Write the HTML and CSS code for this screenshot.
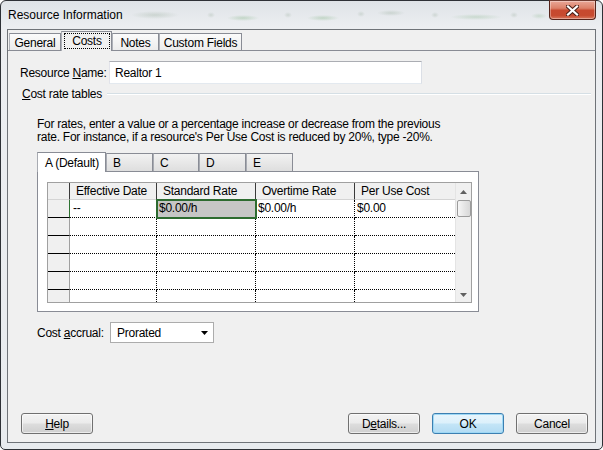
FILE: index.html
```html
<!DOCTYPE html>
<html>
<head>
<meta charset="utf-8">
<link rel="stylesheet" href="styles.css">
</head>
<body>
<div class="window">
  <div class="titlebar">
    <span class="title">Resource Information</span>
    <div class="close">
      <svg width="13" height="11" viewBox="0 0 13 11">
        <path d="M2 1.5 L11 9.5 M11 1.5 L2 9.5" stroke="#4a2018" stroke-width="4.2" stroke-linecap="square" fill="none"/>
        <path d="M2 1.5 L11 9.5 M11 1.5 L2 9.5" stroke="#ffffff" stroke-width="2.2" stroke-linecap="square" fill="none"/>
      </svg>
    </div>
  </div>
  <div class="client">
    <div class="tabs">
      <div class="tab w-general">General</div>
      <div class="tab sel w-costs"><span class="focus">Costs</span></div>
      <div class="tab w-notes">Notes</div>
      <div class="tab w-custom">Custom Fields</div>
    </div>
    <div class="panel">
      <div class="name-row">
        <span class="name-label">Resource <u>N</u>ame:</span>
        <div class="textbox">Realtor 1</div>
      </div>
      <div class="group">
        <span><u>C</u>ost rate tables</span>
        <div class="etch"></div>
      </div>
      <p class="info">For rates, enter a value or a percentage increase or decrease from the previous<br>rate. For instance, if a resource's Per Use Cost is reduced by 20%, type -20%.</p>
      <div class="itabs">
        <div class="itab sel w-a">A (Default)</div>
        <div class="itab w-b">B</div>
        <div class="itab w-c">C</div>
        <div class="itab w-d">D</div>
        <div class="itab w-e">E</div>
      </div>
      <div class="ipanel">
        <div class="grid">
          <div class="gtable">
            <div class="grow hdr">
              <div class="cell rh"></div>
              <div class="cell c1">Effective Date</div>
              <div class="cell c2">Standard Rate</div>
              <div class="cell c3">Overtime Rate</div>
              <div class="cell c4">Per Use Cost</div>
            </div>
            <div class="grow data active">
              <div class="cell rh"></div>
              <div class="cell c1">--</div>
              <div class="cell c2 selcell">$0.00/h</div>
              <div class="cell c3">$0.00/h</div>
              <div class="cell c4">$0.00</div>
            </div>
            <div class="grow data">
              <div class="cell rh"></div><div class="cell c1"></div><div class="cell c2"></div><div class="cell c3"></div><div class="cell c4"></div>
            </div>
            <div class="grow data">
              <div class="cell rh"></div><div class="cell c1"></div><div class="cell c2"></div><div class="cell c3"></div><div class="cell c4"></div>
            </div>
            <div class="grow data">
              <div class="cell rh"></div><div class="cell c1"></div><div class="cell c2"></div><div class="cell c3"></div><div class="cell c4"></div>
            </div>
            <div class="grow data">
              <div class="cell rh"></div><div class="cell c1"></div><div class="cell c2"></div><div class="cell c3"></div><div class="cell c4"></div>
            </div>
            <div class="grow data">
              <div class="cell rh"></div><div class="cell c1"></div><div class="cell c2"></div><div class="cell c3"></div><div class="cell c4"></div>
            </div>
          </div>
          <div class="sb">
            <div class="sb-btn up"><svg width="7" height="4" viewBox="0 0 7 4"><polygon points="3.5,0 7,4 0,4" fill="#606060"/></svg></div>
            <div class="sb-thumb"></div>
            <div class="sb-track"></div>
            <div class="sb-btn down"><svg width="7" height="4" viewBox="0 0 7 4"><polygon points="0,0 7,0 3.5,4" fill="#606060"/></svg></div>
          </div>
        </div>
      </div>
      <div class="accrual">
        <span class="acc-label">Cost <u>a</u>ccrual:</span>
        <div class="combo">
          <span>Prorated</span>
          <svg width="7" height="4" viewBox="0 0 7 4"><polygon points="0,0 7,0 3.5,4" fill="#000"/></svg>
        </div>
      </div>
    </div>
    <div class="buttons">
      <div class="btn"><span><u>H</u>elp</span></div>
      <div class="btn push"><span>D<u>e</u>tails...</span></div>
      <div class="btn ok"><span>OK</span></div>
      <div class="btn"><span>Cancel</span></div>
    </div>
  </div>
</div>
</body>
</html>
```

FILE: styles.css
```css
* { box-sizing: border-box; }
html, body { margin: 0; padding: 0; }
body {
  width: 603px;
  height: 450px;
  overflow: hidden;
  background: #ffffff;
  font: 12px/14px "Liberation Sans", Arial, sans-serif;
  color: #000;
}
u { text-decoration: underline; text-underline-offset: 1px; }

.window {
  width: 603px;
  height: 450px;
  border: 1px solid #2e3136;
  border-radius: 6px 6px 5px 5px;
  background: linear-gradient(#dfe3e7, #eceef1 26px, #e8ebee);
  padding: 0 6px 6px;
  display: flex;
  flex-direction: column;
}

.titlebar {
  height: 28px;
  margin: 0 -6px;
  padding: 0 6px 0 7px;
  display: flex;
  justify-content: space-between;
  align-items: flex-start;
  background-image:
    radial-gradient(ellipse 24px 4px at 154px 14px, rgba(110,140,110,0.22), transparent),
    radial-gradient(ellipse 4px 3px at 210px 14px, rgba(110,140,110,0.2), transparent),
    radial-gradient(ellipse 16px 3px at 242px 17px, rgba(80,150,80,0.25), transparent),
    radial-gradient(ellipse 4px 3px at 287px 14px, rgba(110,140,110,0.2), transparent),
    radial-gradient(ellipse 16px 3px at 322px 17px, rgba(80,150,80,0.25), transparent),
    radial-gradient(ellipse 4px 3px at 360px 13px, rgba(110,140,110,0.2), transparent),
    radial-gradient(ellipse 14px 3px at 390px 12px, rgba(110,140,110,0.22), transparent),
    radial-gradient(ellipse 4px 3px at 434px 14px, rgba(110,140,110,0.2), transparent),
    radial-gradient(ellipse 26px 3px at 475px 16px, rgba(80,150,80,0.2), transparent),
    radial-gradient(ellipse 4px 3px at 513px 14px, rgba(110,140,110,0.2), transparent),
    radial-gradient(ellipse 8px 3px at 538px 15px, rgba(80,150,80,0.18), transparent);
}
.title {
  margin-top: 7px;
  line-height: 14px;
  color: #000;
}
.close {
  margin-top: -1px;
  width: 47px;
  height: 20px;
  border: 1px solid #54231a;
  border-top-color: #6e3a30;
  border-radius: 0 0 4px 4px;
  background: linear-gradient(#e9a797 0%, #dc8069 40%, #c7492f 52%, #c64a2f 80%, #d9785e 100%);
  box-shadow: inset 0 0 0 1px rgba(255,255,255,0.35);
  display: flex;
  align-items: center;
  justify-content: center;
}

.client {
  flex: 1;
  background: #f0f0f0;
  border: 1px solid #6f7378;
  display: flex;
  flex-direction: column;
  letter-spacing: -0.25px;
  white-space: nowrap;
}

/* main tabs */
.tabs {
  height: 20px;
  padding-left: 1px;
  display: flex;
  align-items: flex-end;
}
.tab {
  height: 17px;
  border: 1px solid #898c95;
  border-bottom: none;
  border-left-color: #aeb1b8;
  background: linear-gradient(#fbfbfb, #ececec);
  display: flex;
  align-items: center;
  justify-content: center;
  padding-top: 1px;
}
.tab.sel {
  height: 20px;
  margin-bottom: -1px;
  position: relative;
  z-index: 2;
  background: #f0f0f0;
  padding: 1px 1px 2px 2px;
  align-items: stretch;
}
.focus {
  flex: 1;
  border: 1px dotted #000;
  display: flex;
  align-items: center;
  justify-content: center;
  padding-bottom: 1px;
}
.w-general { width: 52px; }
.w-costs { width: 51px; }
.w-notes { width: 47px; }
.w-custom { width: 83px; }

.panel {
  flex: 1;
  border-top: 1px solid #898c95;
  display: flex;
  flex-direction: column;
}

.name-row {
  margin: 10px 0 0 12px;
  height: 23px;
  display: flex;
  align-items: center;
}
.name-label { width: 89px; }
.textbox {
  width: 313px;
  height: 23px;
  background: #fff;
  border: 1px solid #abadb3;
  border-left-color: #e2e3ea;
  border-right-color: #dbdfe6;
  border-bottom-color: #e3e9ef;
  padding: 4px 0 0 5px;
}

.group {
  margin: 3px 4px 0 14px;
  height: 14px;
  display: flex;
  align-items: center;
}
.etch {
  flex: 1;
  margin-left: 5px;
  border-top: 1px solid #d5dfe5;
  border-bottom: 1px solid #fff;
}

.info {
  margin: 17px 0 0 29px;
  line-height: 13px;
}

/* inner tabs */
.itabs {
  margin: 7px 0 0 29px;
  height: 20px;
  display: flex;
  align-items: flex-end;
}
.itab {
  height: 18px;
  border: 1px solid #898c95;
  border-bottom: none;
  border-left-color: #a8abb2;
  background: linear-gradient(#f2f2f2, #dedede);
  padding: 2px 0 0 6px;
}
.itab.sel {
  height: 20px;
  margin-bottom: -1px;
  position: relative;
  z-index: 2;
  background: #fff;
  padding: 3px 0 0 7px;
}
.w-a { width: 69px; }
.w-b { width: 47px; }
.w-c { width: 46px; }
.w-d { width: 47px; }
.w-e { width: 47px; }

.ipanel {
  margin-left: 29px;
  width: 442px;
  height: 141px;
  background: #fff;
  border: 1px solid #898c95;
  padding: 10px 0 0 9px;
}

.grid {
  width: 425px;
  height: 121px;
  border: 1px solid #a0a0a0;
  display: flex;
  background: #fff;
}
.gtable {
  width: 407px;
  display: flex;
  flex-direction: column;
  overflow: hidden;
}
.grow {
  display: flex;
  height: 18px;
  flex: none;
}
.grow.hdr {
  height: 17px;
  background: #f0f0f0;
}
.cell {
  height: 100%;
  line-height: 17px;
  white-space: nowrap;
  overflow: visible;
}
.rh { width: 22px; }
.c1 { width: 87px; }
.c2 { width: 99px; }
.c3 { width: 99px; }
.c4 { width: 100px; }

.hdr .cell {
  border-right: 1px solid #3a3a3a;
  border-bottom: 1px solid #d4d4d4;
  padding-left: 6px;
}
.hdr .rh { padding-left: 0; border-bottom-color: #d4d4d4; }
.hdr .c4 { border-right: none; }

.data .cell {
  border-right: 1px dotted #000;
  border-bottom: 1px dotted #000;
  padding-left: 2px;
}
.data .rh {
  background: #f0f0f0;
  border-right: 1px solid #a0a0a0;
  border-bottom: 1px solid #000;
}
.data .c1 { padding-left: 3px; }
.data .c4 { border-right: none; }
.active .rh { border-right-color: #2e7232; }
.selcell {
  background: #c6c6c6;
  outline: 2px solid #2d6b30;
  outline-offset: -1px;
  position: relative;
  z-index: 1;
}

.sb {
  width: 16px;
  background: #f0f0f0;
  border-left: 1px solid #e4e4e4;
  display: flex;
  flex-direction: column;
}
.sb-btn {
  display: flex;
  align-items: center;
  justify-content: center;
}
.sb-btn.up { height: 17px; }
.sb-btn.down { height: 14px; }
.sb-thumb {
  height: 17px;
  margin: 0 0 0 1px;
  width: 14px;
  border: 1px solid #9c9c9c;
  border-radius: 2px;
  background: linear-gradient(90deg, #f6f6f6, #e6e6e6 50%, #d8d8d8);
}
.sb-track { flex: 1; }

.accrual {
  margin: 10px 0 0 29px;
  height: 21px;
  display: flex;
  align-items: center;
}
.acc-label { width: 73px; }
.combo {
  width: 104px;
  height: 21px;
  background: #fff;
  border: 1px solid #acacac;
  display: flex;
  align-items: center;
  justify-content: space-between;
  padding: 0 5px 0 6px;
}

.buttons {
  display: flex;
  gap: 12px;
  padding: 0 7px 8px 13px;
}
.btn {
  width: 72px;
  height: 21px;
  border: 1px solid #707070;
  border-radius: 3px;
  background: linear-gradient(#f3f3f3 0%, #ebebeb 48%, #dddddd 52%, #cfcfcf 100%);
  box-shadow: inset 0 0 0 1px rgba(255,255,255,0.6);
  display: flex;
  align-items: center;
  justify-content: center;
}
.btn.push { margin-left: auto; }
.btn.ok {
  border-color: #3c7fb1;
  background: linear-gradient(#e8f5fc 0%, #dcf0fb 48%, #c4e5f7 52%, #b2dbf3 100%);
  box-shadow: inset 0 0 0 1px #9ed8f5;
}
```
